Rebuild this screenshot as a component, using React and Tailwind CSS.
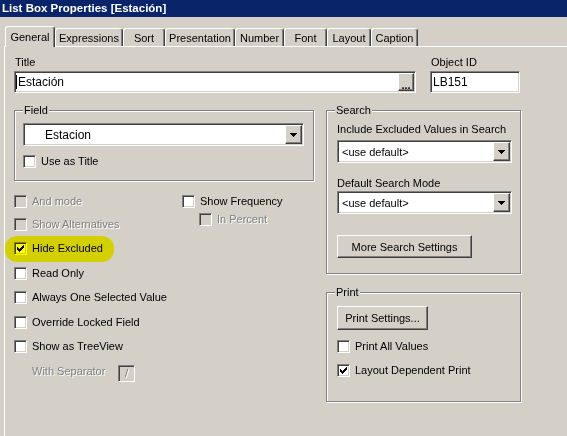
import React from "react";

const sunken =
  "border border-t-[#808080] border-l-[#808080] border-b-white border-r-white shadow-[inset_1px_1px_0_#404040,inset_-1px_-1px_0_#d4d0c8]";
const raised =
  "border border-t-white border-l-white border-b-[#404040] border-r-[#404040] shadow-[inset_-1px_-1px_0_#808080] bg-[#d4d0c8]";
const groupBox =
  "relative border border-[#808080] shadow-[inset_1px_1px_0_#ffffff,1px_1px_0_#ffffff]";
const disabledText = "text-[#808080] [text-shadow:1px_1px_0_#ffffff]";

function Check() {
  return (
    <svg width="7" height="7" viewBox="0 0 7 7" shapeRendering="crispEdges" className="block">
      <path
        fill="#000"
        d="M6 0h1v1h-1z M5 1h2v1h-2z M0 2h1v1h-1z M4 2h3v1h-3z M0 3h2v1h-2z M3 3h3v1h-3z M0 4h5v1h-5z M1 5h3v1h-3z M2 6h1v1h-1z"
      />
    </svg>
  );
}

function CheckBox({ checked, disabled }) {
  return (
    <div
      className={`w-[13px] h-[13px] shrink-0 flex items-center justify-center ${sunken} ${
        disabled ? "bg-[#d4d0c8]" : "bg-white"
      }`}
    >
      {checked && <Check />}
    </div>
  );
}

function CheckRow({ label, checked, disabled, className = "" }) {
  return (
    <div className={`flex items-center h-[13px] ${className}`}>
      <CheckBox checked={checked} disabled={disabled} />
      <span className={`ml-[5px] leading-[13px] whitespace-nowrap ${disabled ? disabledText : "text-black"}`}>
        {label}
      </span>
    </div>
  );
}

function Arrow() {
  return (
    <svg width="7" height="4" viewBox="0 0 7 4" shapeRendering="crispEdges" className="block">
      <path fill="#000" d="M0 0h7v1h-7z M1 1h5v1h-5z M2 2h3v1h-3z M3 3h1v1h-1z" />
    </svg>
  );
}

function Combo({ text, width, textPad }) {
  return (
    <div className={`h-[23px] bg-white flex items-stretch p-[1px] ${sunken} ${width}`}>
      <div className={`flex-1 flex items-center leading-[14px] ${textPad}`}>{text}</div>
      <div className={`w-[17px] flex items-center justify-center ${raised}`}>
        <Arrow />
      </div>
    </div>
  );
}

function Tab({ label, width, selected }) {
  return (
    <div
      className={`${width} flex justify-center bg-[#d4d0c8] border-t border-l border-white border-r border-r-[#404040] rounded-t-[3px] shadow-[inset_-1px_0_0_#808080] ${
        selected ? "h-[21px] -mb-px relative z-10 pt-[3px]" : "h-[18px] pt-[2px]"
      }`}
    >
      <span className="leading-[14px] whitespace-nowrap">{label}</span>
    </div>
  );
}

function Legend({ children }) {
  return (
    <span className="absolute -top-[8px] left-[8px] px-[1px] bg-[#d4d0c8] leading-[14px]">{children}</span>
  );
}

export default function App() {
  return (
    <div className="w-[567px] h-[436px] bg-[#d4d0c8] overflow-hidden font-['Liberation_Sans',Arial,sans-serif] text-[11px] text-black">
      {/* title bar */}
      <div className="h-[17px] bg-[#0a246a] text-white font-bold text-[11.5px] leading-[17px] pl-[2px] whitespace-nowrap">
        List Box Properties [Estación]
      </div>

      {/* tabs */}
      <div className="flex items-end h-[29px] pl-[5px]">
        <Tab label="General" width="w-[50px]" selected />
        <Tab label="Expressions" width="w-[68px]" />
        <Tab label="Sort" width="w-[42px]" />
        <Tab label="Presentation" width="w-[70px]" />
        <Tab label="Number" width="w-[49px]" />
        <Tab label="Font" width="w-[43px]" />
        <Tab label="Layout" width="w-[44px]" />
        <Tab label="Caption" width="w-[47px]" />
      </div>

      {/* panel */}
      <div className="ml-[4px] h-[400px] border-t border-l border-white pl-[9px] pt-[8px]">
        {/* row 1 */}
        <div className="flex">
          <div className="w-[402px]">
            <div className="pl-[1px] leading-[14px]">Title</div>
            <div className={`mt-[2px] h-[22px] bg-white flex items-stretch py-[1px] pr-[1px] ${sunken}`}>
              <div className="flex-1 flex items-center">
                <span className="w-px h-[14px] bg-black ml-[1px]" />
                <span className="ml-[1px] leading-[14px] text-[12px]">Estación</span>
              </div>
              <div className={`w-[16px] flex items-end justify-center ${raised}`}>
                <span className="font-bold leading-[12px] text-[11px] -mb-[1px]">...</span>
              </div>
            </div>
          </div>
          <div className="ml-[14px] w-[90px]">
            <div className="pl-[1px] leading-[14px]">Object ID</div>
            <div className={`mt-[2px] h-[22px] bg-white flex items-center pl-[2px] ${sunken}`}>
              <span className="leading-[14px] text-[12px]">LB151</span>
            </div>
          </div>
        </div>

        {/* row 2 */}
        <div className="flex mt-[17px]">
          {/* left column */}
          <div className="w-[300px]">
            <div className={`${groupBox} h-[71px] pl-[8px] pt-[12px]`}>
              <Legend>Field</Legend>
              <Combo text="Estacion" width="w-[281px]" textPad="pl-[20px] text-[12px]" />
              <CheckRow label="Use as Title" className="mt-[9px]" />
            </div>

            <div className="flex mt-[14px]">
              <div className="w-[168px]">
                <CheckRow label="And mode" disabled />
                <CheckRow label="Show Alternatives" disabled className="mt-[10px]" />
                <div className="relative mt-[11px]">
                  <div className="absolute -left-[9px] -top-[6px] w-[109px] h-[26px] rounded-[12px] bg-[#ffff00] mix-blend-multiply z-10" />
                  <CheckRow label="Hide Excluded" checked />
                </div>
                <CheckRow label="Read Only" className="mt-[12px]" />
                <CheckRow label="Always One Selected Value" className="mt-[11px]" />
                <CheckRow label="Override Locked Field" className="mt-[12px]" />
                <CheckRow label="Show as TreeView" className="mt-[11px]" />
                <div className="flex items-start mt-[12px] ml-[18px]">
                  <span className={`leading-[13px] w-[86px] whitespace-nowrap ${disabledText}`}>With Separator</span>
                  <div className={`w-[17px] h-[17px] bg-[#d4d0c8] flex items-center justify-center ${sunken}`}>
                    <span className={`leading-[13px] ${disabledText}`}>/</span>
                  </div>
                </div>
              </div>
              <div>
                <CheckRow label="Show Frequency" />
                <CheckRow label="In Percent" disabled className="mt-[5px] ml-[17px]" />
              </div>
            </div>
          </div>

          {/* right column */}
          <div className="ml-[12px] w-[195px]">
            <div className={`${groupBox} h-[164px] pl-[10px] pt-[11px]`}>
              <Legend>Search</Legend>
              <div className="leading-[14px] whitespace-nowrap">Include Excluded Values in Search</div>
              <div className="mt-[4px]">
                <Combo text="<use default>" width="w-[175px]" textPad="pl-[3px]" />
              </div>
              <div className="mt-[13px] leading-[14px]">Default Search Mode</div>
              <div className="mt-[1px]">
                <Combo text="<use default>" width="w-[175px]" textPad="pl-[3px]" />
              </div>
              <div className={`mt-[21px] w-[135px] h-[23px] flex items-center justify-center ${raised}`}>
                <span className="leading-[14px]">More Search Settings</span>
              </div>
            </div>

            <div className={`${groupBox} mt-[18px] h-[110px] pl-[10px] pt-[13px]`}>
              <Legend>Print</Legend>
              <div className={`w-[91px] h-[24px] flex items-center justify-center ${raised}`}>
                <span className="leading-[14px]">Print Settings...</span>
              </div>
              <CheckRow label="Print All Values" className="mt-[10px]" />
              <CheckRow label="Layout Dependent Print" checked className="mt-[11px]" />
            </div>
          </div>
        </div>
      </div>
    </div>
  );
}
